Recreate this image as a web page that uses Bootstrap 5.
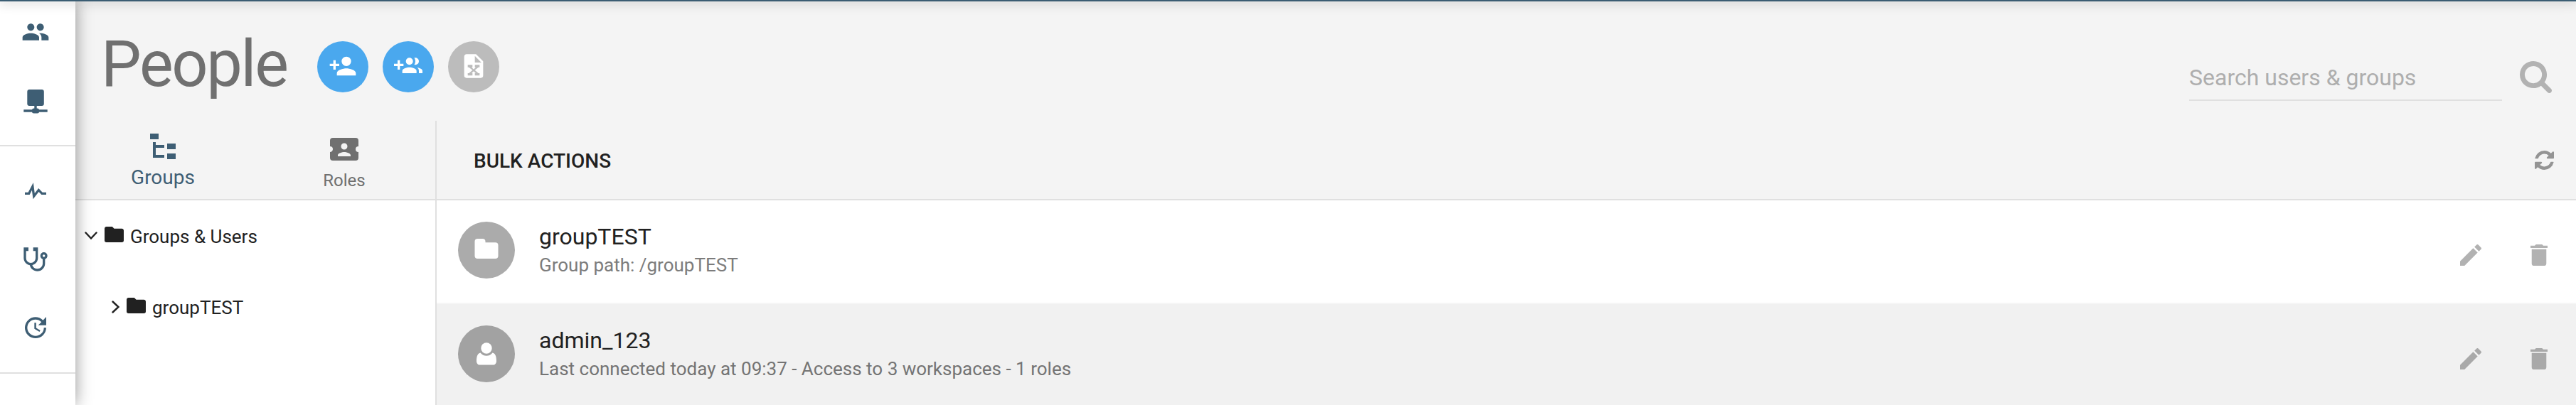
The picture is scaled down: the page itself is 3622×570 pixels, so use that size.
<!DOCTYPE html>
<html lang="en">
<head>
<meta charset="utf-8">
<title>People</title>
<link href="https://cdn.jsdelivr.net/npm/bootstrap@5.3.0/dist/css/bootstrap.min.css" rel="stylesheet">
<style>
body{font-family:Roboto,"Liberation Sans",sans-serif;color:#212121;background:#f4f4f4;height:570px;overflow:hidden;line-height:1}
svg{display:block;fill:currentColor;flex:none}
.topbar{height:2px;background:#3b5d73;box-shadow:0 0 16px 1px rgba(0,0,0,.34);position:relative;z-index:3}
.shell{height:568px}
.rail{width:106px;background:#fff;color:#3e5e74;box-shadow:0 0 22px rgba(0,0,0,.42);position:relative;z-index:2;padding-top:23px}
.rail svg{width:40px;height:40px;margin-left:30px}
.rail hr{width:106px;height:2px;border:0;background:#e0e0e0;opacity:1;margin:0}
.head{height:168px;padding:56px 34px 0 36px}
.head h1{font-size:90px;line-height:66px;font-weight:400;color:#707070;margin:0 42px 0 0;width:262px;letter-spacing:-2.3px}
.fab{width:72px;height:72px;background:#4aa8ee;color:#fff;margin-right:20px}
.fab svg{width:40px;height:40px;margin-bottom:2px}
.fab.off{background:#bcbcbc}
.find{width:440px;height:56px;margin-top:28px;border-bottom:2px solid #e0e0e0;margin-right:25px}
.find input{background:none;border:0;width:100%;padding:0;font-size:32px;height:46px;outline:0}
.find input::placeholder{color:#aeaeae;opacity:1}
.side{width:508px;border-right:2px solid #e0e0e0;background:#fff}
.tabs,.bulk{height:112px;border-bottom:2px solid #e0e0e0;background:#f4f4f4}
.tab{width:264px;color:#707070;font-size:24px;padding-top:16px}
.tab.on{color:#3e5e74;font-size:28px;padding-top:12px;width:246px}
.tab.on span{margin-top:6px}
.tab span{margin-top:8px}
.tab svg{width:48px;height:48px}
.node{height:100px;font-size:26px}
.node svg:first-child{margin-bottom:1px}
.node span{padding-top:2px;margin-left:9px}
.bulk{font-size:28px;font-weight:500;padding:0 31px 0 52px}
.bulk span{padding-top:3px}
.entry{height:146px;background:#fff;padding:30px 40px 0 30px;border-bottom:2px solid #f6f6f6}
.entry.alt{background:#f1f1f1}
.face{width:80px;height:80px;background:#ababab;color:#fff;margin-right:34px}
.alt .face{background:#a2a2a2}
.name{font-size:32px;line-height:38px;padding-top:2px}
.info{font-size:26px;line-height:32px;color:#7c7c7c;padding-top:5px}
.alt .info{color:#747474}
.acts{color:#b2b2b2;padding-top:32px}
.alt .acts{color:#a9a9a9}
</style>
</head>
<body>
<div class="topbar"></div>
<div class="shell d-flex">
<nav class="rail d-flex flex-column align-items-start flex-shrink-0">
<svg viewBox="0 0 24 24"><path d="M16 11c1.66 0 2.99-1.34 2.99-3S17.66 5 16 5s-3 1.34-3 3 1.34 3 3 3zm-8 0c1.66 0 2.99-1.34 2.99-3S9.66 5 8 5 5 6.34 5 8s1.34 3 3 3zm0 2c-2.33 0-7 1.17-7 3.5V19h14v-2.5c0-2.330-4.670-3.500-7-3.500zm8 0c-.29 0-.62.02-.97.05 1.160.84 1.970 1.970 1.970 3.450V19h6v-2.500c0-2.330-4.670-3.500-7-3.500z"/></svg>
<svg style="margin-top:57px" viewBox="0 0 40 40"><rect x="8.300" y="4" width="23.500" height="23" rx="3"/><path d="M18.300 26h3.400v5h-3.400zM3.300 32.300h33.400v3.400H3.300z"/><rect x="15" y="30.600" width="10" height="7" rx="2.500"/></svg>
<hr style="margin-top:42px">
<svg style="margin-top:43px" viewBox="0 0 24 24"><path d="M3,13H5.790L10.100,4.790L11.280,13.750L14.500,9.660L17.830,13H21V15H17L14.670,12.670L9.920,18.730L8.940,11.310L7,15H3V13Z"/></svg>
<svg style="margin-top:56px" viewBox="0 0 24 24"><path d="M19,8C19.560,8 20,8.430 20,9A1,1 0 0,1 19,10C18.430,10 18,9.550 18,9C18,8.430 18.430,8 19,8M2,2V11C2,13.960 4.190,16.500 7.140,16.910C7.760,19.920 10.420,22 13.500,22A6.500,6.500 0 0,0 20,15.500V11.810C21.160,11.390 22,10.290 22,9A3,3 0 0,0 19,6A3,3 0 0,0 16,9C16,10.290 16.840,11.400 18,11.810V15.410C18,17.910 16,19.910 13.500,19.910C11.500,19.910 9.820,18.700 9.220,16.900C12,16.300 14,13.800 14,11V2H10V5H12V11A4,4 0 0,1 8,15A4,4 0 0,1 4,11V5H6V2H2Z"/></svg>
<svg style="margin-top:56px" viewBox="0 0 24 24"><path d="M21,10.120H14.220L16.960,7.300C14.230,4.600 9.810,4.500 7.080,7.200C4.350,9.910 4.350,14.280 7.080,17C9.810,19.700 14.230,19.700 16.960,17C18.320,15.650 19,14.080 19,12.100H21C21,14.080 20.120,16.650 18.360,18.390C14.850,21.870 9.150,21.870 5.640,18.390C2.140,14.920 2.110,9.280 5.620,5.810C9.130,2.340 14.760,2.340 18.270,5.810L21,3V10.120M12.500,8V12.250L16,14.330L15.280,15.540L11,13V8H12.500Z"/></svg>
<hr style="margin-top:43px">
</nav>
<main class="flex-grow-1 d-flex flex-column">
<header class="head d-flex align-items-start flex-shrink-0">
<h1>People</h1>
<button class="fab btn border-0 rounded-circle p-0 d-flex align-items-center justify-content-center"><svg viewBox="0 0 24 24"><path d="M15 14c-2.670 0-8 1.330-8 4v2h16v-2c0-2.670-5.330-4-8-4M6 10V7H4v3H1v2h3v3h2v-3h3v-2m6 2a4 4 0 0 0 4-4 4 4 0 0 0-4-4 4 4 0 0 0-4 4 4 4 0 0 0 4 4z"/></svg></button>
<button class="fab btn border-0 rounded-circle p-0 d-flex align-items-center justify-content-center"><svg viewBox="0 0 24 24"><path d="M13 13c-2 0-6 1-6 3v2h12v-2c0-2-4-3-6-3M19.620 13.160C20.450 13.880 21 14.820 21 16v2h3v-2c0-1.460-2.180-2.440-4.380-2.840M13 11a3 3 0 1 0 0-6 3 3 0 0 0 0 6m5 0a3 3 0 0 0 0-6c-.320 0-.630.050-.910.140.570.810.900 1.790.900 2.860s-.340 2.040-.900 2.860c.280.090.590.140.910.140M8 10H5V7H3v3H0v2h3v3h2v-3h3z"/></svg></button>
<button class="fab off btn border-0 rounded-circle p-0 d-flex align-items-center justify-content-center"><svg viewBox="0 0 24 24"><path d="M14,2H6C4.890,2 4,2.890 4,4V20A2,2 0 0,0 6,22H18A2,2 0 0,0 20,20V8L14,2M17,11V13H16L13,15.500L16,18H17V20H13V18H13.800L12,16.300L10.200,18H11V20H7V18H8L11,15.500L8,13H7V11H11V13H10.200L12,14.700L13.800,13H13V11H17M13,9V3.500L18.500,9H13Z"/></svg></button>
<div class="find ms-auto"><input type="text" placeholder="Search users &amp; groups"></div>
<svg style="margin-top:28px" width="45" height="45" viewBox="0 0 1664 1664"><path d="M1152 704q0-185-131.500-316.500T704 256 387.500 387.500 256 704t131.500 316.500T704 1152t316.500-131.500T1152 704zm512 832q0 52-38 90t-90 38q-54 0-90-38l-343-342q-179 124-399 124-143 0-273.500-55.500t-225-150-150-225T0 704t55.500-273.500 150-225 225-150T704 0t273.500 55.500 225 150 150 225T1408 704q0 220-124 399l343 343q37 37 37 90z" fill="#b2b2b2"/></svg>
</header>
<div class="d-flex flex-grow-1">
<aside class="side flex-shrink-0">
<div class="tabs d-flex">
<div class="tab on d-flex flex-column align-items-center flex-shrink-0"><svg viewBox="0 0 24 24"><path d="M3,3H9V7H3V3M15,10H21V14H15V10M15,17H21V21H15V17M13,13H7V18H13V20H5V9H7V11H13V13Z"/></svg><span>Groups</span></div>
<div class="tab d-flex flex-column align-items-center flex-shrink-0"><svg viewBox="0 0 24 24"><path d="M20,12A2,2 0 0,0 22,14V18A2,2 0 0,1 20,20H4A2,2 0 0,1 2,18V14C3.110,14 4,13.100 4,12A2,2 0 0,0 2,10V6A2,2 0 0,1 4,4H20A2,2 0 0,1 22,6V10A2,2 0 0,0 20,12M16.500,16.250C16.500,14.750 13.500,14 12,14C10.500,14 7.500,14.750 7.500,16.250V17H16.500V16.250M12,12.250A2.250,2.250 0 0,0 14.250,10A2.250,2.250 0 0,0 12,7.750A2.250,2.250 0 0,0 9.750,10A2.250,2.250 0 0,0 12,12.250Z"/></svg><span>Roles</span></div>
</div>
<div class="node d-flex align-items-center" style="padding-left:13px"><svg width="18" height="12" viewBox="0 0 18 12"><path d="M1.500 1.500 9 9.500l7.500-8" fill="none" stroke="#212121" stroke-width="2.400" stroke-linecap="round"/></svg><svg class="mb-1" style="margin-left:10px" width="27" height="22" viewBox="2 4 20 16" preserveAspectRatio="none"><path d="M10,4H4C2.890,4 2,4.890 2,6V18A2,2 0 0,0 4,20H20A2,2 0 0,0 22,18V8C22,6.890 21.100,6 20,6H12L10,4Z"/></svg><span>Groups &amp; Users</span></div>
<div class="node d-flex align-items-center" style="padding-left:51px"><svg width="12" height="18" viewBox="0 0 12 18"><path d="M1.500 1.500 9.500 9l-8 7.500" fill="none" stroke="#212121" stroke-width="2.400" stroke-linecap="round"/></svg><svg class="mb-1" style="margin-left:9px" width="27" height="22" viewBox="2 4 20 16" preserveAspectRatio="none"><path d="M10,4H4C2.890,4 2,4.890 2,6V18A2,2 0 0,0 4,20H20A2,2 0 0,0 22,18V8C22,6.890 21.100,6 20,6H12L10,4Z"/></svg><span>groupTEST</span></div>
</aside>
<section class="flex-grow-1">
<div class="bulk d-flex align-items-center justify-content-between"><span>BULK ACTIONS</span><svg width="27" height="27" viewBox="0 0 1536 1536"><path d="M1511 928q0 5-1 7-64 268-268 434.500T764 1536q-146 0-282.500-55T238 1324l-129 129q-19 19-45 19t-45-19-19-45V960q0-26 19-45t45-19h448q26 0 45 19t19 45-19 45l-137 137q71 66 161 102t187 36q134 0 250-65t186-179q11-17 53-117 8-23 30-23h192q13 0 22.500 9.500t9.500 22.500zm25-800v448q0 26-19 45t-45 19h-448q-26 0-45-19t-19-45 19-45l138-138Q969 256 768 256q-134 0-250 65T332 500q-11 17-53 117-8 23-30 23H50q-13 0-22.500-9.500T18 608v-7q65-268 270-434.500T768 0q146 0 284 55.500T1297 212l130-129q19-19 45-19t45 19 19 45z" fill="#949494"/></svg></div>
<div class="entry d-flex align-items-start"><div class="face rounded-circle d-flex align-items-center justify-content-center"><svg style="margin-bottom:4px" width="34" height="28" viewBox="0 0 34 28"><path d="M4.500 0h7a4 4 0 0 1 4 4v1.300h14a4 4 0 0 1 4 4V24a4 4 0 0 1-4 4h-25a4 4 0 0 1-4-4V4a4 4 0 0 1 4-4z"/></svg></div>
<div><div class="name">groupTEST</div><div class="info">Group path: /groupTEST</div></div>
<div class="acts ms-auto d-flex"><svg width="30" height="30" viewBox="3 3 18 18"><path d="M20.710,7.040C21.100,6.650 21.100,6 20.710,5.630L18.370,3.290C18,2.900 17.350,2.900 16.960,3.290L15.120,5.120L18.870,8.870M3,17.250V21H6.750L17.810,9.930L14.060,6.180L3,17.250Z"/></svg><svg style="margin-left:69px" width="24" height="30" viewBox="5 3 14 18" preserveAspectRatio="none"><path d="M19,4H15.500L14.500,3H9.500L8.500,4H5V6H19M6,19A2,2 0 0,0 8,21H16A2,2 0 0,0 18,19V7H6V19Z"/></svg></div></div>
<div class="entry alt d-flex align-items-start"><div class="face rounded-circle d-flex align-items-center justify-content-center"><svg style="margin-bottom:1px" width="28" height="32" viewBox="0 0 28 32"><path d="M5.500 14.500A10.500 10.500 0 0 0 22.500 14.500C26.500 15 28 20 28 26c0 3.500-2 5.500-4.500 5.500h-19C2 31.500 0 29.500 0 26 0 20 1.500 15 5.500 14.500z"/><circle cx="14" cy="8" r="7.700"/></svg></div>
<div><div class="name">admin_123</div><div class="info">Last connected today at 09:37 - Access to 3 workspaces - 1 roles</div></div>
<div class="acts ms-auto d-flex"><svg width="30" height="30" viewBox="3 3 18 18"><path d="M20.710,7.040C21.100,6.650 21.100,6 20.710,5.630L18.370,3.290C18,2.900 17.350,2.900 16.960,3.290L15.120,5.120L18.870,8.870M3,17.250V21H6.750L17.810,9.930L14.060,6.180L3,17.250Z"/></svg><svg style="margin-left:69px" width="24" height="30" viewBox="5 3 14 18" preserveAspectRatio="none"><path d="M19,4H15.500L14.500,3H9.500L8.500,4H5V6H19M6,19A2,2 0 0,0 8,21H16A2,2 0 0,0 18,19V7H6V19Z"/></svg></div></div>
</section>
</div>
</main>
</div>
<script src="https://cdn.jsdelivr.net/npm/bootstrap@5.3.0/dist/js/bootstrap.bundle.min.js"></script>
</body>
</html>
